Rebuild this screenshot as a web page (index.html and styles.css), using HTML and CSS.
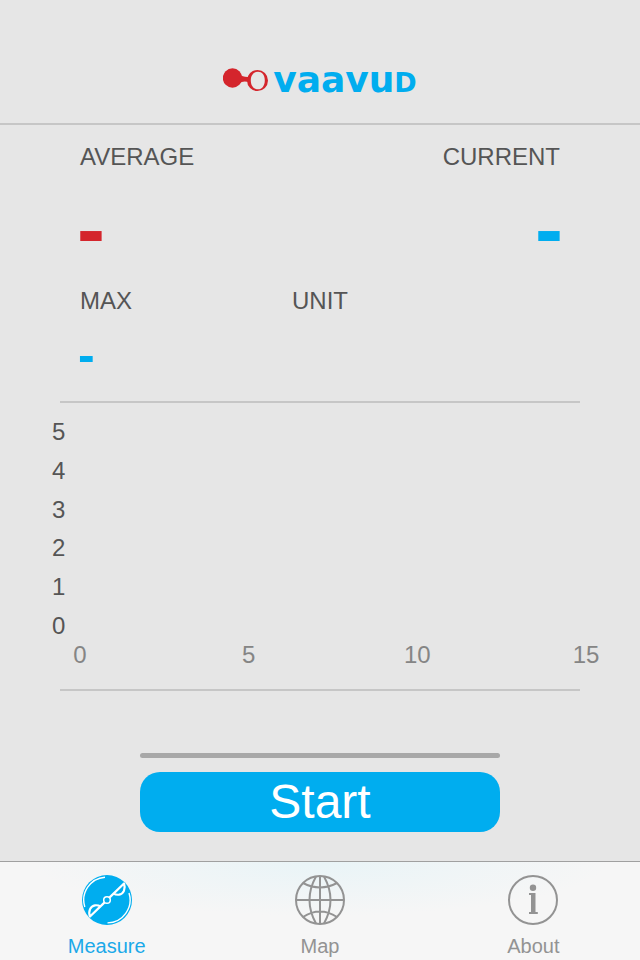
FILE: index.html
```html
<!DOCTYPE html>
<html lang="en">
<head>
<meta charset="utf-8">
<meta name="viewport" content="width=device-width, initial-scale=1">
<title>Vaavud</title>
<link rel="stylesheet" href="styles.css">
</head>
<body>
<header class="header">
  <svg class="brand-mark" width="46" height="26" viewBox="0 0 46 26" aria-hidden="true">
    <circle cx="9.5" cy="11" r="9.7" fill="#d4252c"/>
    <path d="M16 7 Q20 10.5 26 10 V15 Q20 13.500 16 16Z" fill="#d4252c"/>
    <path fill="#d4252c" fill-rule="evenodd" d="M34.500 3 A10.500 10.500 0 1 1 34.500 24 A10.500 10.500 0 1 1 34.500 3Z M35 4.800 C30.800 4.800 27.800 8.200 27.800 13.500 C27.800 18.800 30.800 22.300 35 22.300 C39 22.300 41.800 18.800 41.800 13.500 C41.800 8.200 39 4.800 35 4.800Z"/>
  </svg>
  <span class="brand-name">vaavu<span class="brand-last">d</span></span>
</header>
<main class="main">
  <section class="readings">
    <div class="reading">
      <h2 class="label">AVERAGE</h2>
      <p class="value value-large red">-</p>
    </div>
    <div class="reading reading-end">
      <h2 class="label">CURRENT</h2>
      <p class="value value-large">-</p>
    </div>
  </section>
  <section class="readings readings-small">
    <div class="reading">
      <h2 class="label">MAX</h2>
      <p class="value value-small">-</p>
    </div>
    <div class="reading reading-center">
      <h2 class="label">UNIT</h2>
    </div>
    <div class="reading"></div>
  </section>
  <section class="chart">
    <div class="y-axis"><span>5</span><span>4</span><span>3</span><span>2</span><span>1</span><span>0</span></div>
    <div class="x-axis"><span>0</span><span>5</span><span>10</span><span>15</span></div>
  </section>
  <section class="controls">
    <div class="progress"></div>
    <button class="start" type="button">Start</button>
  </section>
</main>
<nav class="tabs">
  <a class="tab active" href="#measure">
    <svg width="52" height="52" viewBox="0 0 52 52" aria-hidden="true">
      <circle cx="26" cy="26" r="25" fill="#00adef"/>
      <g fill="none" stroke="#fff">
        <path stroke-width="1.400" d="M3.800 33 A23 23 0 0 1 24 3.200 M48 19 A23 23 0 0 1 26.500 48.900"/>
        <path stroke-width="2.200" stroke-linejoin="round" d="M23.600 28.400 L9 42.500 C7 37 9.500 32 14 31.300 C16.500 31 18.500 31.800 19.500 32.400 M28.400 23.600 L43 9.500 C45 15 42.500 20 38 20.700 C35.500 21 33.500 20.200 32.500 19.600"/>
        <circle cx="26" cy="26" r="3.300" stroke-width="1.500" fill="#00adef"/>
      </g>
    </svg>
    <span>Measure</span>
  </a>
  <a class="tab" href="#map">
    <svg width="52" height="52" viewBox="0 0 52 52" fill="none" stroke="#939393" stroke-width="2" aria-hidden="true">
      <circle cx="26" cy="26" r="24"/>
      <path d="M26 2V50 M2 26H50 M22 2.500 Q9 26 22 49.500 M30 2.500 Q43 26 30 49.500 M9 9 Q26 18 43 9 M9 43 Q26 32 43 43"/>
    </svg>
    <span>Map</span>
  </a>
  <a class="tab" href="#about">
    <svg width="52" height="52" viewBox="0 0 52 52" aria-hidden="true">
      <circle cx="26" cy="26" r="24" fill="none" stroke="#939393" stroke-width="2"/>
      <circle cx="26" cy="13.800" r="3.200" fill="#939393"/>
      <path fill="#939393" d="M22 19H28.500V38H30.800V40H22V38H24V21H22Z"/>
    </svg>
    <span>About</span>
  </a>
</nav>
</body>
</html>
```
FILE: styles.css
```css
* {
  box-sizing: border-box;
}

body {
  display: flex;
  flex-direction: column;
  min-height: 100vh;
  margin: 0;
  background: #e6e6e6;
  color: #555;
  font-family: "Liberation Sans", Arial, sans-serif;
  font-size: 24px;
  line-height: 28px;
}

h2,
p {
  margin: 0;
}

.header {
  display: flex;
  align-items: center;
  justify-content: center;
  gap: 4px;
  padding: 60px 0 23px;
  border-bottom: 2px solid #c6c6c6;
}

.brand-name {
  color: #00adef;
  font-family: "DejaVu Sans", sans-serif;
  font-size: 36px;
  font-weight: bold;
  line-height: 40px;
}

.brand-last {
  font-size: 27px;
  line-height: 1;
  text-transform: uppercase;
}

.main {
  flex: 1;
}

.readings {
  display: flex;
  padding: 18px 80px 0;
}

.readings-small {
  margin: 0 60px;
  padding: 18px 20px 0;
  border-bottom: 2px solid #c6c6c6;
}

.reading {
  flex: 1;
}

.reading-end {
  text-align: right;
}

.reading-center {
  text-align: center;
}

.label {
  font-size: 24px;
  font-weight: normal;
}

.value {
  color: #00adef;
  font-weight: bold;
}

.value-large {
  margin: 0 -3px;
  padding-top: 18px;
  font-size: 84px;
  line-height: 80px;
}

.value-small {
  margin: 0 -2px;
  padding-bottom: 6px;
  font-size: 50px;
  line-height: 80px;
}

.red {
  color: #d4252c;
}

.chart {
  margin: 0 60px;
  padding: 15px 0 20px;
  border-bottom: 2px solid #c6c6c6;
}

.y-axis {
  display: flex;
  flex-direction: column;
  justify-content: space-between;
  height: 222px;
  margin-left: -8px;
}

.x-axis {
  display: flex;
  justify-content: space-between;
  margin: 1px -6px 0 20px;
  color: #858585;
}

.x-axis span {
  display: flex;
  justify-content: center;
  width: 0;
}

.controls {
  width: 360px;
  max-width: 100%;
  margin: 0 auto;
  padding: 62px 0 29px;
}

.progress {
  height: 5px;
  margin-bottom: 14px;
  border-radius: 3px;
  background: #a8a8a8;
}

.start {
  display: block;
  width: 100%;
  height: 60px;
  padding: 0;
  border: 0;
  border-radius: 20px;
  background: #00adef;
  color: #fff;
  font: 48px/60px "Liberation Sans", Arial, sans-serif;
}

.tabs {
  display: flex;
  border-top: 1px solid #a0a0a0;
  background: radial-gradient(ellipse 45% 55% at 50% 0, #e9f4f7, #f6f6f6);
}

.tab {
  display: flex;
  flex: 1;
  flex-direction: column;
  align-items: center;
  gap: 8px;
  padding: 12px 0 2px;
  color: #939393;
  font-size: 20px;
  line-height: 24px;
  text-decoration: none;
}

.active {
  color: #1aa9e9;
}
```
